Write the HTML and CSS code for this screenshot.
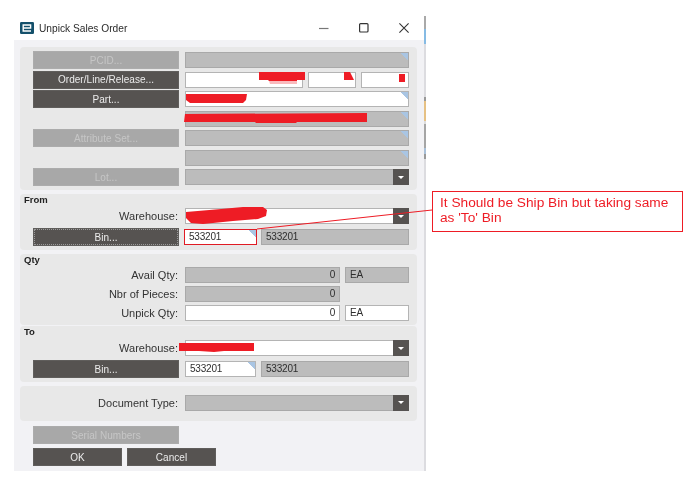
FILE: index.html
```html
<!DOCTYPE html>
<html lang="en">
<head>
<meta charset="utf-8">
<title>Unpick Sales Order</title>
<link rel="stylesheet" href="styles.css">
</head>
<body>
<div class="stage">
  <div class="window">
    <header class="titlebar">
      <svg class="logo" width="14" height="12" viewBox="0 0 14 12"><rect width="14" height="12" rx="1.2" fill="#14506b"/><path d="M11 9H3.2V3h7.4v3H3.2" fill="none" stroke="#fff" stroke-width="1.4"/></svg>
      <h1 class="title">Unpick Sales Order</h1>
      <div class="controls">
        <svg width="10" height="10" viewBox="0 0 10 10"><path d="M0 5.5h9.5" stroke="#777" stroke-width="1.2"/></svg>
        <svg width="10" height="10" viewBox="0 0 10 10"><rect x=".6" y=".6" width="8.4" height="8.4" rx="1" fill="none" stroke="#333" stroke-width="1.2"/></svg>
        <svg width="10" height="10" viewBox="0 0 10 10"><path d="M.4.4l9.2 9.2M9.6.4L.4 9.6" stroke="#333" stroke-width="1.1"/></svg>
      </div>
    </header>
    <main class="dialog">
      <section class="panel panel-top">
        <div class="row"><button class="btn off">PCID...</button><div class="field grey mark"></div></div>
        <div class="row"><button class="btn">Order/Line/Release...</button><div class="field white"></div><div class="field white w48"></div><div class="field white w48"></div></div>
        <div class="row"><button class="btn">Part...</button><div class="field white mark"></div></div>
        <div class="row"><span></span><div class="field grey mark"></div></div>
        <div class="row"><button class="btn off">Attribute Set...</button><div class="field grey mark"></div></div>
        <div class="row"><span></span><div class="field grey mark"></div></div>
        <div class="row"><button class="btn off">Lot...</button><div class="field grey select"><span class="drop"></span></div></div>
      </section>
      <section class="panel panel-from">
        <h2 class="legend">From</h2>
        <div class="row"><label class="lbl">Warehouse:</label><div class="field white select"><span class="drop"></span></div></div>
        <div class="row"><button class="btn focus">Bin...</button><div class="field white mark w72 flagged">533201</div><div class="field grey">533201</div></div>
      </section>
      <section class="panel panel-qty">
        <h2 class="legend">Qty</h2>
        <div class="row"><label class="lbl">Avail Qty:</label><div class="field grey num">0</div><div class="field grey w64">EA</div></div>
        <div class="row"><label class="lbl">Nbr of Pieces:</label><div class="field grey num">0</div><div class="w64"></div></div>
        <div class="row"><label class="lbl">Unpick Qty:</label><div class="field white num">0</div><div class="field white w64">EA</div></div>
      </section>
      <section class="panel panel-to">
        <h2 class="legend">To</h2>
        <div class="row"><label class="lbl">Warehouse:</label><div class="field white select"><span class="drop"></span></div></div>
        <div class="row"><button class="btn">Bin...</button><div class="field white mark w72">533201</div><div class="field grey">533201</div></div>
      </section>
      <section class="panel panel-doc">
        <div class="row"><label class="lbl">Document Type:</label><div class="field grey select"><span class="drop"></span></div></div>
      </section>
      <footer class="actions">
        <button class="btn off">Serial Numbers</button>
        <div class="pair"><button class="btn">OK</button><button class="btn">Cancel</button></div>
      </footer>
    </main>
  </div>
  <svg class="overlay" width="690" height="492" viewBox="0 0 690 492">
    <g fill="#ee1c25">
      <path d="M259 72h46v8h-8v1h-28l-1-1h-9z"/>
      <path d="M269 81h28v3h-27z" opacity=".3"/>
      <path d="M344 72h6l4 8h-10z"/>
      <path d="M399 74h6v8h-6z"/>
      <path d="M186 94l61 0-1 6-3 3H190l-4-3z"/>
      <path d="M185 114l182-1v9l-70 0-1 1h-40l-1-1H184z"/>
      <path d="M186 212l35-3 22-2h20l4 3-1 6-8 3-25 2-30 3-12-1-5-5z"/>
      <path d="M179 343h75v8l-30 0-10 1-15-1h-20z"/>
    </g>
    <path d="M432 210L257 229" stroke="#ee1c25" stroke-width="1" fill="none"/>
  </svg>
  <aside class="note">It Should be Ship Bin but taking same as 'To' Bin</aside>
</div>
</body>
</html>
```
FILE: styles.css
```css
* { box-sizing: border-box; }
html, body { margin: 0; padding: 0; background: #fff; }
body { font-family: "Liberation Sans", Arial, sans-serif; }
.stage { position: relative; width: 690px; height: 492px; overflow: hidden; padding: 16px 0 0 14px; filter: blur(.3px); }
.window { width: 412px; height: 455px; border-right: 2px solid #ccc; border-image: linear-gradient(to bottom, #a9a9a9 14px, #86bbe4 14px, #86bbe4 29px, #dcdce0 29px, #dcdce0 82px, #999 82px, #999 86px, #e6c184 86px, #e6c184 106px, #ddd 106px, #ddd 109px, #a5a5a5 109px, #a5a5a5 132px, #a9c0d8 132px, #a9c0d8 138px, #999 138px, #999 143px, #dcdce0 143px) 1; }
.titlebar { height: 24px; display: flex; align-items: center; padding-left: 6px; background: #fff; }
.logo { flex: none; }
.title { margin: 0 0 0 5px; font-size: 10.2px; font-weight: normal; color: #2b2b2b; flex: 1; white-space: nowrap; }
.controls { display: flex; gap: 30px; margin-right: 15px; }
.dialog { height: 431px; padding: 7px 7px 0 6px; background: #f2f2f5; display: flex; flex-direction: column; }
.panel { background: #e8e8e8; border-radius: 4px; padding: 0 8px 0 13px; display: flex; flex-direction: column; flex: none; }
.panel-top { height: 143px; padding-top: 4px; gap: 1.5px; }
.panel-from { height: 56px; margin-top: 4px; gap: 3px; }
.panel-qty { height: 71px; margin-top: 4px; gap: 1px; }
.panel-to { height: 56px; margin-top: 1px; gap: 3px; }
.panel-doc { height: 35px; margin-top: 4px; padding-top: 7.5px; }
.legend { margin: 0 0 0 -9px; height: 10px; font-size: 9.5px; line-height: 12px; font-weight: bold; color: #222; }
.panel-qty .legend { height: 11px; }
.row { height: 18px; flex: none; display: flex; align-items: center; gap: 5px; }
.row > :first-child { flex: none; width: 146px; margin-right: 1px; }
.btn { height: 18px; margin: 0; padding: 0; border: 1px solid #605e5c; border-radius: 0; background: #565351; color: #ececec; font: 10px "Liberation Sans", Arial, sans-serif; letter-spacing: .05px; }
.btn.off { background: #a8a8a8; border-color: #acacac; color: #c6c6c6; }
.btn.focus { outline: 1px dotted #9a9a9a; outline-offset: -2px; }
.lbl { font-size: 11px; text-align: right; color: #333; padding-right: 1px; }
.field { flex: 1; min-width: 0; height: 16px; padding: 0 4px; border: 1px solid #a9a9a9; font-size: 10px; letter-spacing: -.2px; line-height: 14px; color: #2e2e2e; }
.grey { background-color: #bcbcbc; }
.white { background-color: #fff; border-color: #b4b4b4; }
.mark { background-image: linear-gradient(225deg, #a9c5e3 5.5px, transparent 5.5px); }
.w48 { flex: none; width: 48px; }
.w64 { flex: none; width: 64px; }
.w72 { flex: none; width: 71px; }
.num { text-align: right; }
.select { display: flex; justify-content: flex-end; padding: 0; }
.drop { width: 16px; height: 16px; margin: -1px -1px -1px 0; background: #565351; display: flex; align-items: center; justify-content: center; }
.drop::before { content: ""; border-left: 3px solid transparent; border-right: 3px solid transparent; border-top: 3px solid #fff; }
.flagged { width: 73px; margin: 0 -1px; padding-left: 4px; border-color: #e01b24; }
.actions { padding: 5px 0 0 13px; display: flex; flex-direction: column; gap: 4px; }
.actions > .btn { width: 146px; }
.pair { display: flex; gap: 5px; }
.pair .btn { width: 89px; }
.overlay { position: absolute; left: 0; top: 0; pointer-events: none; }
.note { position: absolute; left: 432px; top: 191px; width: 251px; height: 41px; padding: 2.5px 7px; border: 1.5px solid #ee1c25; font-size: 13.7px; line-height: 15.6px; color: #ee1c25; background: #fff; }
```
